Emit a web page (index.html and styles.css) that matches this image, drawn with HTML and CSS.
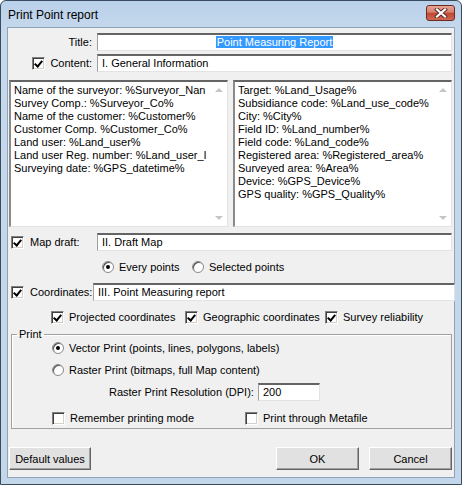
FILE: index.html
```html
<!DOCTYPE html>
<html>
<head>
<meta charset="utf-8">
<link rel="stylesheet" href="styles.css">
</head>
<body>
<div class="window">
  <div class="titlebar">
    <span class="title">Print Point report</span>
    <span class="close"><svg width="14" height="10" viewBox="0 0 14 10"><path d="M3 1.5 L11 8.5 M11 1.5 L3 8.5" stroke="#5a2a25" stroke-width="4" stroke-linecap="square"/><path d="M3 1.5 L11 8.5 M11 1.5 L3 8.5" stroke="#fff" stroke-width="2.2" stroke-linecap="square"/></svg></span>
  </div>
  <div class="client">
    <div class="row r-title">
      <span class="lbl">Title:</span>
      <span class="input center"><span class="sel">Point Measuring Report</span></span>
    </div>
    <div class="row r-content">
      <span class="lbl"><span class="cb on"></span>Content:</span>
      <span class="input">I. General Information</span>
    </div>
    <div class="areas">
      <div class="area">
        <div class="lines">Name of the surveyor: %Surveyor_Nan<br>Survey Comp.: %Surveyor_Co%<br>Name of the customer: %Customer%<br>Customer Comp. %Customer_Co%<br>Land user: %Land_user%<br>Land user Reg. number: %Land_user_I<br>Surveying date: %GPS_datetime%</div>
        <div class="sb"><span class="up"></span><span class="dn"></span></div>
      </div>
      <div class="area">
        <div class="lines">Target: %Land_Usage%<br>Subsidiance code: %Land_use_code%<br>City: %City%<br>Field ID: %Land_number%<br>Field code: %Land_code%<br>Registered area: %Registered_area%<br>Surveyed area: %Area%<br>Device: %GPS_Device%<br>GPS quality: %GPS_Quality%</div>
        <div class="sb"><span class="up"></span><span class="dn"></span></div>
      </div>
    </div>
    <div class="row r-map">
      <span class="lbl2 w-map"><span class="cb on"></span>Map draft:</span>
      <span class="input">II. Draft Map</span>
    </div>
    <div class="radios">
      <span class="opt o-every"><span class="rb on"></span>Every points</span>
      <span class="opt"><span class="rb"></span>Selected points</span>
    </div>
    <div class="row r-coord">
      <span class="lbl2 w-coord"><span class="cb on"></span>Coordinates:</span>
      <span class="input">III. Point Measuring report</span>
    </div>
    <div class="checks">
      <span class="opt o1"><span class="cb on"></span>Projected coordinates</span>
      <span class="opt o2"><span class="cb on"></span>Geographic coordinates</span>
      <span class="opt"><span class="cb on"></span>Survey reliability</span>
    </div>
    <fieldset class="group">
      <legend>Print</legend>
      <div class="gline first"><span class="rb on"></span>Vector Print (points, lines, polygons, labels)</div>
      <div class="gline"><span class="rb"></span>Raster Print (bitmaps, full Map content)</div>
      <div class="dpi"><span>Raster Print Resolution (DPI):</span><span class="input small">200</span></div>
      <div class="gline two"><span class="opt o3"><span class="cb"></span>Remember printing mode</span><span class="opt"><span class="cb"></span>Print through Metafile</span></div>
    </fieldset>
    <div class="buttons">
      <span class="btn def">Default values</span>
      <span class="spacer"></span>
      <span class="btn">OK</span>
      <span class="btn">Cancel</span>
    </div>
  </div>
</div>
</body>
</html>
```

FILE: styles.css
```css
html, body { margin: 0; padding: 0; background: #fff; }
.window {
  width: 462px; height: 485px; box-sizing: border-box;
  border: 1px solid #3a4b5e; border-radius: 6px 6px 0 0;
  background: linear-gradient(#b9d1ea 0, #c6d8ec 30px, #c4d7ea 100%);
  display: flex; flex-direction: column;
  font-family: "Liberation Sans", Arial, sans-serif; font-size: 11px; color: #000;
}
.titlebar { height: 26px; display: flex; align-items: flex-start; position: relative; }
.title { font-size: 12px; margin: 7px 0 0 7px; color: #000; }
.close {
  position: absolute; right: 6px; top: 4px; width: 29px; height: 16px; box-sizing: border-box;
  border: 1px solid #6d2a25; border-radius: 3px;
  background: linear-gradient(#e8a493 0, #d4806e 45%, #c2452f 50%, #cf6a53 100%);
  display: flex; align-items: center; justify-content: center;
}
.client {
  flex: 1; margin: 0 6px 6px 6px; background: #f0f0f0;
  border: 1px solid #8ea3ba; display: flex; flex-direction: column; padding: 0 2px 0 1px;
}
.row { display: flex; align-items: center; height: 18px; }
.r-title { margin-top: 5px; }
.r-content { margin-top: 3px; }
.lbl { width: 83px; padding-right: 5px; text-align: right; display: flex; justify-content: flex-end; align-items: center; }
.lbl .cb { margin-right: 5px; }
.lbl2 { display: flex; align-items: center; padding-left: 2px; }
.lbl2 .cb { margin-right: 6px; }
.w-map { width: 86px; }
.w-coord { width: 80px; }
.input {
  flex: 1; height: 18px; box-sizing: border-box; background: #fff;
  border-top: 2px solid #646464; border-left: 1px solid #a0a0a0;
  border-right: 1px solid #e3e3e3; border-bottom: 1px solid #e3e3e3;
  padding: 0 4px; line-height: 15px; white-space: nowrap; overflow: hidden;
}
.input.center { text-align: center; }
.sel { background: #3399ff; color: #fff; padding: 0 1px; }
.areas { display: flex; gap: 5px; margin-top: 8px; height: 147px; }
.area {
  flex: 1; box-sizing: border-box; background: #fff; display: flex;
  border-top: 2px solid #646464; border-left: 2px solid #8a8a8a;
  border-right: 1px solid #e3e3e3; border-bottom: 1px solid #e3e3e3;
}
.lines { flex: 1; padding: 2px 0 0 3px; line-height: 13px; white-space: nowrap; overflow: hidden; }
.sb { width: 17px; display: flex; flex-direction: column; justify-content: space-between; align-items: center; padding: 6px 0; }
.up { width: 0; height: 0; border-left: 4px solid transparent; border-right: 4px solid transparent; border-bottom: 4px solid #c6c6c6; }
.dn { width: 0; height: 0; border-left: 4px solid transparent; border-right: 4px solid transparent; border-top: 4px solid #c6c6c6; }
.r-map { margin-top: 6px; }
.radios { display: flex; height: 18px; align-items: center; margin-top: 7px; padding-left: 93px; }
.radios .o-every { width: 90px; }
.r-coord { margin-top: 7px; }
.r-coord .input { flex: none; width: 362px; margin-left: 2px; }
.opt { display: flex; align-items: center; white-space: nowrap; }
.opt .cb, .gline .cb { margin-right: 5px; }
.checks { display: flex; height: 18px; align-items: center; margin-top: 7px; padding-left: 42px; }
.checks .o1 { width: 134px; }
.checks .o2 { width: 140px; }
.cb {
  display: inline-block; width: 13px; height: 13px; box-sizing: border-box; flex: none;
  background: #fff; border-top: 1px solid #808080; border-left: 1px solid #808080;
  border-right: 1px solid #fff; border-bottom: 1px solid #fff;
  box-shadow: inset 1px 1px 0 #404040, inset -1px -1px 0 #d4d0c8; position: relative;
}
.cb.on::after {
  content: ""; position: absolute; left: 3px; top: 1px; width: 3px; height: 6px;
  border-right: 2px solid #000; border-bottom: 2px solid #000; transform: rotate(40deg);
}
.rb {
  display: inline-block; width: 12px; height: 12px; box-sizing: border-box; flex: none; border-radius: 50%;
  background: #fff; border: 1px solid #8a8a8a; box-shadow: inset 1px 1px 0 #505050;
  margin-right: 5px; position: relative;
}
.rb.on::after { content: ""; position: absolute; left: 3px; top: 3px; width: 4px; height: 4px; border-radius: 50%; background: #000; }
.group {
  margin: 3px 0 0 2px; padding: 0 0 0 40px; height: 100px; box-sizing: border-box;
  border: 1px solid #a0a0a0; box-shadow: inset 1px 1px 0 #fff;
}
.group legend { padding: 0 2px; margin-left: -35px; line-height: 10px; }
.gline { display: flex; align-items: center; height: 16px; margin-top: 6px; }
.gline.first { margin-top: 1px; }
.dpi { display: flex; align-items: center; height: 18px; margin-top: 5px; padding-left: 57px; }
.dpi .small { flex: 0 0 62px; width: 62px; margin-left: 4px; }
.gline.two { margin-top: 9px; }
.two .o3 { width: 193px; }
.buttons { display: flex; margin-top: 18px; height: 23px; gap: 10px; }
.spacer { flex: 1; }
.btn {
  width: 83px; height: 23px; box-sizing: border-box; display: flex; align-items: center; justify-content: center;
  background: #e1e1e1;
  border-top: 1px solid #fff; border-left: 1px solid #fff;
  border-right: 1px solid #646464; border-bottom: 1px solid #646464;
  box-shadow: inset -1px -1px 0 #a0a0a0;
}
.btn.def { width: 82px; }
```
